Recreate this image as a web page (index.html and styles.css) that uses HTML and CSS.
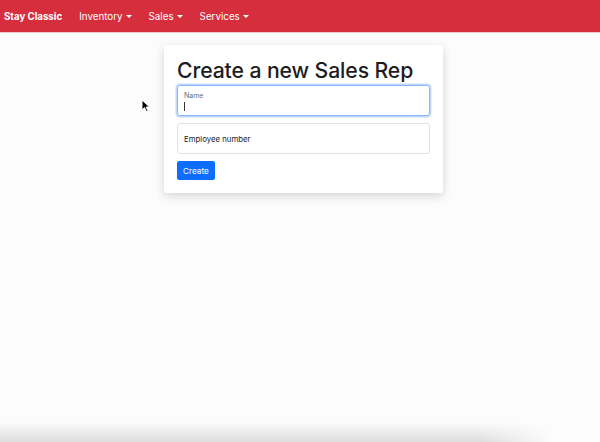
FILE: index.html
```html
<!DOCTYPE html>
<html>
<head>
<meta charset="utf-8">
<link rel="stylesheet" href="styles.css">
</head>
<body>
<nav class="navbar">
  <span class="brand">Stay Classic</span>
  <span class="nav-item">Inventory<span class="caret"></span></span>
  <span class="nav-item">Sales<span class="caret"></span></span>
  <span class="nav-item">Services<span class="caret"></span></span>
</nav>
<main class="page">
  <div class="card">
    <h1 class="title">Create a new Sales Rep</h1>
    <div class="field focused">
      <label class="float-label">Name</label>
      <span class="caret-text"></span>
    </div>
    <div class="field">
      <span class="placeholder">Employee number</span>
    </div>
    <button class="btn">Create</button>
  </div>
</main>
<svg class="pointer" width="10" height="14" viewBox="0 0 10 14">
  <path d="M1 1 L1 11 L3.5 8.6 L5.4 12.6 L7 11.9 L5.2 8 L8.5 8 Z" fill="#000" stroke="#fff" stroke-width="1"/>
</svg>
<div class="bottom-fade"></div>
</body>
</html>
```
FILE: styles.css
```css
html, body {
  margin: 0;
  padding: 0;
  height: 100%;
}
body {
  background: #fdfcfd;
  font-family: Inter, "Liberation Sans", sans-serif;
  color: #212529;
  overflow: hidden;
}
.navbar {
  height: 32px;
  background: #d62e3d;
  display: flex;
  align-items: center;
  padding-left: 4px;
  box-shadow: 0 1px 0 #f1c7cb;
}
.brand {
  color: #fff;
  font-weight: 700;
  font-size: 9.7px;
  margin-right: 17px;
}
.nav-item {
  color: #fff;
  font-size: 9.8px;
  margin-right: 17px;
  display: flex;
  align-items: center;
}
.caret {
  display: inline-block;
  margin-left: 3px;
  border-top: 3.5px solid #fff;
  border-left: 3.5px solid transparent;
  border-right: 3.5px solid transparent;
}
.page {
  padding-top: 13px;
  padding-left: 164px;
}
.card {
  width: 253px;
  background: #fff;
  padding: 13px 13px 13px 13px;
  box-shadow: 0 3px 10px rgba(0,0,0,0.16);
  border-radius: 2px;
}
.title {
  margin: 0 0 3px 0;
  font-size: 21.2px;
  font-weight: 500;
  line-height: 24px;
  letter-spacing: -0.1px;
  color: #1d1d1f;
}
.field {
  height: 29px;
  border: 1px solid #dee2e6;
  border-radius: 3px;
  margin-bottom: 7px;
  padding: 0 6px;
  display: flex;
  flex-direction: column;
  justify-content: center;
  box-sizing: content-box;
}
.field.focused {
  border-color: #86b7fe;
  box-shadow: 0 0 0 1.5px #c2d9fd;
  justify-content: flex-start;
  padding-top: 0;
}
.float-label {
  font-size: 7px;
  color: #6c6f73;
  margin-top: 5px;
  line-height: 9px;
}
.caret-text {
  width: 1px;
  height: 9px;
  background: #333;
  margin-top: 2px;
}
.placeholder {
  font-size: 7.8px;
  color: #212529;
}
.btn {
  display: block;
  margin-top: 0;
  background: #0d6efd;
  color: #fff;
  border: none;
  border-radius: 2px;
  font-family: Inter, "Liberation Sans", sans-serif;
  font-size: 8.2px;
  height: 19px;
  padding: 0 6px;
}
.pointer {
  position: absolute;
  left: 141px;
  top: 99px;
}
.bottom-fade {
  position: fixed;
  left: 0;
  right: 0;
  bottom: 0;
  height: 20px;
  background: linear-gradient(to bottom, rgba(0,0,0,0), rgba(0,0,0,0.12));
  -webkit-mask-image: linear-gradient(to right, #000 80%, transparent 92%);
  mask-image: linear-gradient(to right, #000 80%, transparent 92%);
}
```
